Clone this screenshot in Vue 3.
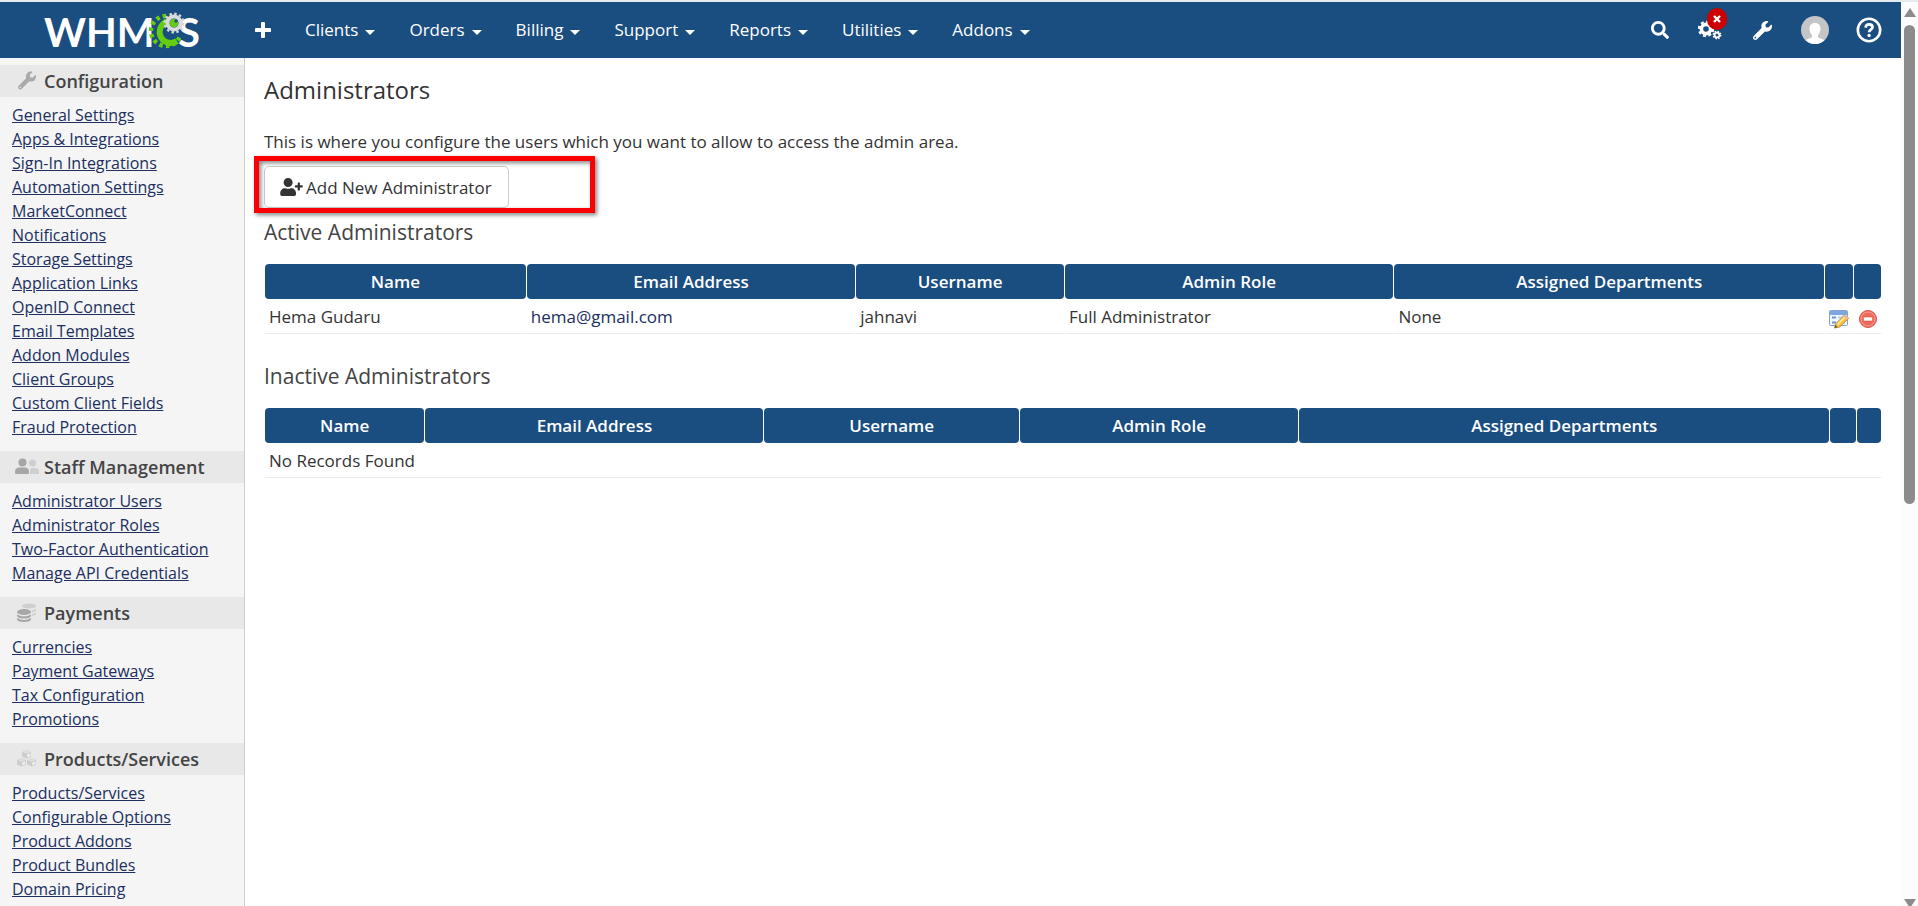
<template>
  <div class="page">
    <div class="view">
      <header class="topbar">
        <a href="#" class="logo" aria-label="WHMCS">
          <svg width="160" height="56" viewBox="0 -8 160 56">
            <text class="logo-text" x="0" y="37">WHM</text>
            <text class="logo-text" x="134" y="37">S</text>
            <clipPath id="green-side">
              <path d="M102 0H126V18L144 35V42H102Z" />
            </clipPath>
            <circle cx="122" cy="21" r="14" fill="#1a4d80" />
            <path d="M133 31A11 11 0 1 1 127 11" fill="none" stroke="#6c1" stroke-width="6" />
            <circle cx="122" cy="21" r="15" fill="none" stroke="#6c1" stroke-width="4.500" stroke-dasharray="3.500 3.230" pathLength="94.250" clip-path="url(#green-side)" />
            <circle cx="130" cy="13" r="6.500" fill="#1a4d80" stroke="#d8dadd" stroke-width="4" />
            <circle cx="130" cy="13" r="9.300" fill="none" stroke="#d8dadd" stroke-width="2.400" stroke-dasharray="2.400 2.470" />
            <circle cx="130" cy="13" r="4.300" fill="#6c1" />
            <circle cx="132" cy="11" r="1.700" fill="#1a4d80" />
          </svg>
        </a>

        <nav class="menu">
          <a href="#" class="menu-add" aria-label="Add">
            <svg width="16" height="16" viewBox="0 0 16 16">
              <path d="M8 1.500V14.500M1.500 8H14.500" stroke="#fff" stroke-width="4" stroke-linecap="round" />
            </svg>
          </a>
          <a v-for="item in menu" :key="item" href="#" class="menu-item">
            {{ item }}
            <span class="caret"></span>
          </a>
        </nav>

        <div class="tools">
          <button type="button" class="tool search" aria-label="Search">
            <svg width="18" height="18" viewBox="0 0 512 512"><path fill="#fff" :d="icons.search" /></svg>
          </button>
          <button type="button" class="tool cogs" aria-label="Automation status">
            <svg width="24" height="20" viewBox="0 0 24 20">
              <g fill="none" stroke="#fff">
                <circle cx="8" cy="9" r="4.600" stroke-width="3.600" />
                <circle cx="8" cy="9" r="7" stroke-width="2.400" stroke-dasharray="3 2.498" />
                <circle cx="19" cy="15" r="2.400" stroke-width="1.800" />
                <circle cx="19" cy="15" r="3.700" stroke-width="1.400" stroke-dasharray="1.600 1.306" />
                <circle cx="19" cy="4" r="2.400" stroke-width="1.800" />
              </g>
            </svg>
            <span class="badge">
              <svg width="8" height="8" viewBox="0 0 8 8"><path d="M1 1L7 7M7 1L1 7" stroke="#fff" stroke-width="2.400" /></svg>
            </span>
          </button>
          <button type="button" class="tool wrench" aria-label="Setup">
            <svg width="19" height="19" viewBox="0 0 512 512"><path fill="#fff" :d="icons.wrench" /></svg>
          </button>
          <button type="button" class="tool avatar" aria-label="My account">
            <svg width="28" height="28" viewBox="0 0 28 28">
              <circle cx="14" cy="14" r="14" fill="#c4c5c7" />
              <path d="M14 7C18 7 19.800 9.700 19.500 13.500C19.300 16.200 18 18 17 19V21C18 22.500 21.500 22.500 23.500 24.300A14 14 0 0 1 4.500 24.300C6.500 22.500 10 22.500 11 21V19C10 18 8.700 16.200 8.500 13.500C8.200 9.700 10 7 14 7Z" fill="#fff" />
            </svg>
          </button>
          <button type="button" class="tool help" aria-label="Help">
            <svg width="26" height="26" viewBox="0 0 26 26" fill="none" stroke="#fff">
              <circle cx="13" cy="13" r="11.200" stroke-width="2.600" />
              <path d="M9.600 10.600C9.900 8.300 11.300 7.400 13.100 7.400C15.200 7.400 16.500 8.600 16.500 10.300C16.500 12.600 13.100 12.700 13.100 15.200" stroke-width="2.800" />
              <circle cx="13.100" cy="18.500" r="1.700" fill="#fff" stroke="none" />
            </svg>
          </button>
        </div>
      </header>

      <div class="body">
        <aside class="sidebar">
          <section v-for="group in sidebar" :key="group.title" class="group">
            <h3 class="group-title">
              <svg v-if="group.icon === 'wrench'" class="group-icon" viewBox="0 0 24 20">
                <svg x="3" y="0" width="18" height="19" viewBox="0 0 512 512"><path fill="#aaa" :d="icons.wrench" /></svg>
              </svg>
              <svg v-else-if="group.icon === 'users'" class="group-icon" viewBox="0 0 24 20">
                <g fill="#cfcfcf">
                  <circle cx="17.500" cy="6" r="3.500" />
                  <path d="M15 17V12.500Q15 11 17 11H20Q24 11 24 14.500V17Z" />
                </g>
                <g fill="#a6a6a6">
                  <circle cx="7.500" cy="5.500" r="4" />
                  <path d="M0 15Q0 10.500 4.500 10.500H10Q14 10.500 14 15V16Q14 17 13 17H1Q0 17 0 16Z" />
                </g>
              </svg>
              <svg v-else-if="group.icon === 'coins'" class="group-icon" viewBox="0 0 24 20">
                <g fill="#cfcfcf">
                  <ellipse cx="14" cy="3" rx="7" ry="2.500" />
                  <path d="M16.500 7.500Q20 7 21 5.500V7.500Q20 9 17 9.500ZM17 11Q20 10.500 21 9V11Q20 12.500 17 13Z" />
                </g>
                <g fill="#a6a6a6">
                  <ellipse cx="9" cy="9" rx="7" ry="3" />
                  <path d="M2 11.500Q9 15.500 16 11.500V13Q15 15.500 9 15.500T2 13ZM2 15Q9 19 16 15V16.500Q15 19 9 19T2 16.500Z" />
                </g>
              </svg>
              <svg v-else class="group-icon" viewBox="0 0 24 20">
                <g v-for="(cube, i) in cubes" :key="i" :transform="cube">
                  <path d="M0 2L4.500 0L9 2V6.500L4.500 8.500L0 6.500Z" fill="#cdcdcd" />
                  <path d="M0.500 2L4.500 0.300L8.500 2L4.500 3.800Z" fill="#e0e0e0" />
                  <path d="M5.300 4.500L8.200 3.300V6L5.300 7.300Z" fill="#f2f2f2" />
                </g>
              </svg>
              {{ group.title }}
            </h3>
            <ul class="links">
              <li v-for="link in group.links" :key="link"><a href="#">{{ link }}</a></li>
            </ul>
          </section>
        </aside>

        <main class="content">
          <h1>Administrators</h1>
          <p class="intro">This is where you configure the users which you want to allow to access the admin area.</p>

          <div class="actions">
            <button type="button" class="btn">
              <svg width="23" height="18" viewBox="0 0 640 512"><path fill="#333" :d="icons.userPlus" /></svg>
              Add New Administrator
            </button>
            <span class="highlight"></span>
          </div>

          <section v-for="list in lists" :key="list.title" class="list">
            <h2>{{ list.title }}</h2>
            <table class="datatable">
              <colgroup>
                <col v-for="(w, i) in list.widths" :key="i" :style="{ width: w + '%' }">
              </colgroup>
              <thead>
                <tr>
                  <th v-for="col in columns" :key="col">{{ col }}</th>
                  <th></th>
                  <th></th>
                </tr>
              </thead>
              <tbody>
                <tr v-for="row in list.rows" :key="row.username">
                  <td>{{ row.name }}</td>
                  <td><a :href="'mailto:' + row.email">{{ row.email }}</a></td>
                  <td>{{ row.username }}</td>
                  <td>{{ row.role }}</td>
                  <td>{{ row.departments }}</td>
                  <td class="icon-cell">
                    <a href="#" aria-label="Edit">
                      <svg width="20" height="20" viewBox="0 0 20 20">
                        <rect x="0.500" y="1.500" width="18" height="15" rx="1" fill="#f1f6fd" stroke="#7fa3d6" />
                        <rect x="1" y="2" width="17" height="4" fill="#7ea6e0" />
                        <path d="M3 8.500H7M3 13.500H7" stroke="#6c93cf" stroke-width="2" />
                        <path d="M9 8.500H16M9 13.500H16" stroke="#b9cdea" stroke-width="2" />
                        <path d="M5.500 19L7 14.500L15.500 6L19.500 9.500L10.500 18Z" fill="#f5c242" stroke="#c58a35" />
                        <path d="M8.500 15.500L16.500 7.500" stroke="#fbe38f" stroke-width="2" />
                        <path d="M5.500 19L6.500 16L8.500 18Z" fill="#555" />
                        <path d="M14.500 7L16 5.500L19.500 8.500L18.500 10.500Z" fill="#e9b7a0" />
                      </svg>
                    </a>
                  </td>
                  <td class="icon-cell">
                    <a href="#" aria-label="Delete">
                      <svg width="20" height="20" viewBox="0 0 20 20">
                        <circle cx="10" cy="10" r="8.500" fill="#ee6a5c" stroke="#d9564a" />
                        <circle cx="10" cy="10" r="7" fill="none" stroke="#f6a195" />
                        <rect x="5.500" y="8" width="9" height="4" rx="1" fill="#fff" stroke="#d8584b" stroke-width="0.600" />
                      </svg>
                    </a>
                  </td>
                </tr>
                <tr v-if="!list.rows.length">
                  <td colspan="7">No Records Found</td>
                </tr>
              </tbody>
            </table>
          </section>
        </main>
      </div>
    </div>

    <div class="scrollbar" aria-hidden="true">
      <span class="arrow up"></span>
      <span class="thumb"></span>
      <span class="arrow down"></span>
    </div>
  </div>
</template>

<script setup>
const icons = {
  search: 'M505 442.7L405.3 343c-4.5-4.5-10.6-7-17-7H372c27.6-35.3 44-79.7 44-128C416 93.1 322.9 0 208 0S0 93.1 0 208s93.1 208 208 208c48.3 0 92.7-16.4 128-44v16.3c0 6.4 2.5 12.5 7 17l99.7 99.7c9.4 9.4 24.6 9.4 33.9 0l28.3-28.3c9.4-9.4 9.4-24.6.1-34zM208 336c-70.7 0-128-57.2-128-128 0-70.7 57.2-128 128-128 70.7 0 128 57.2 128 128 0 70.7-57.2 128-128 128z',
  wrench: 'M507.73 109.1c-2.24-9.03-13.54-12.09-20.12-5.51l-74.36 74.36-67.88-11.31-11.31-67.88 74.36-74.36c6.62-6.62 3.43-17.9-5.66-20.16-47.38-11.74-99.55.91-136.58 37.93-39.64 39.64-50.55 97.1-34.05 147.2L18.74 402.76c-24.99 24.99-24.99 65.51 0 90.5 24.99 24.99 65.51 24.99 90.5 0l213.21-213.21c50.12 16.71 107.47 5.68 147.37-34.22 37.07-37.07 49.7-89.32 37.91-136.73zM64 472c-13.25 0-24-10.75-24-24 0-13.26 10.75-24 24-24s24 10.75 24 24c0 13.25-10.75 24-24 24z',
  userPlus: 'M624 208h-64v-64c0-8.8-7.2-16-16-16h-32c-8.8 0-16 7.2-16 16v64h-64c-8.8 0-16 7.2-16 16v32c0 8.8 7.2 16 16 16h64v64c0 8.8 7.2 16 16 16h32c8.8 0 16-7.2 16-16v-64h64c8.8 0 16-7.2 16-16v-32c0-8.8-7.2-16-16-16zm-400 48c70.7 0 128-57.3 128-128S294.7 0 224 0 96 57.3 96 128s57.3 128 128 128zm89.6 32h-16.7c-22.2 10.2-46.9 16-72.9 16s-50.6-5.8-72.9-16h-16.7C60.2 288 0 348.2 0 422.4V464c0 26.5 21.5 48 48 48h352c26.5 0 48-21.5 48-48v-41.6c0-74.2-60.2-134.4-134.4-134.4z',
}

const cubes = ['translate(7 1)', 'translate(2 9)', 'translate(12 9)']

const menu = ['Clients', 'Orders', 'Billing', 'Support', 'Reports', 'Utilities', 'Addons']

const sidebar = [
  {
    title: 'Configuration',
    icon: 'wrench',
    links: [
      'General Settings',
      'Apps & Integrations',
      'Sign-In Integrations',
      'Automation Settings',
      'MarketConnect',
      'Notifications',
      'Storage Settings',
      'Application Links',
      'OpenID Connect',
      'Email Templates',
      'Addon Modules',
      'Client Groups',
      'Custom Client Fields',
      'Fraud Protection',
    ],
  },
  {
    title: 'Staff Management',
    icon: 'users',
    links: ['Administrator Users', 'Administrator Roles', 'Two-Factor Authentication', 'Manage API Credentials'],
  },
  {
    title: 'Payments',
    icon: 'coins',
    links: ['Currencies', 'Payment Gateways', 'Tax Configuration', 'Promotions'],
  },
  {
    title: 'Products/Services',
    icon: 'cubes',
    links: ['Products/Services', 'Configurable Options', 'Product Addons', 'Product Bundles', 'Domain Pricing'],
  },
]

const columns = ['Name', 'Email Address', 'Username', 'Admin Role', 'Assigned Departments']

const lists = [
  {
    title: 'Active Administrators',
    widths: [16.2, 20.4, 12.9, 20.4, 26.7, 1.7, 1.7],
    rows: [
      {
        name: 'Hema Gudaru',
        email: 'hema@gmail.com',
        username: 'jahnavi',
        role: 'Full Administrator',
        departments: 'None',
      },
    ],
  },
  {
    title: 'Inactive Administrators',
    widths: [9.9, 21, 15.8, 17.3, 32.9, 1.6, 1.5],
    rows: [],
  },
]
</script>

<style>
body {
  margin: 0;
}
</style>

<style scoped>
.page {
  display: flex;
  box-sizing: border-box;
  height: 100vh;
  overflow: hidden;
  border-top: 2px solid #e6ebf0;
  background: #fff;
  color: #333;
  font-family: "Open Sans", "Noto Sans", sans-serif;
  font-size: 17px;
}

.view {
  flex: 1;
  min-width: 0;
  display: flex;
  flex-direction: column;
}

a {
  color: #202f60;
  text-decoration: none;
}

svg {
  display: block;
}

/* top bar */
.topbar {
  flex: none;
  display: flex;
  align-items: center;
  height: 56px;
  padding: 0 19px 0 44px;
  background: #1a4d80;
}

.logo-text {
  fill: #fff;
  font-family: Lato, sans-serif;
  font-size: 40px;
  font-weight: 700;
}

.menu {
  display: flex;
  align-items: center;
  margin-left: 51px;
}

.menu-add {
  margin-right: 17px;
}

.menu-item {
  display: flex;
  align-items: center;
  gap: 7px;
  padding: 0 17px;
  line-height: 24px;
  color: #fff;
}

.caret {
  margin-top: 4px;
  border: 5px solid transparent;
  border-top-color: #fff;
  border-bottom: 0;
}

.tools {
  display: flex;
  align-items: center;
  gap: 27px;
  margin-left: auto;
}

.tool {
  position: relative;
  padding: 0;
  border: 0;
  background: none;
  cursor: pointer;
}

.tool.search,
.tool.wrench {
  margin-right: 2px;
}

.tool.cogs {
  margin-right: 4px;
}

.badge {
  position: absolute;
  top: -12px;
  right: -5px;
  display: flex;
  align-items: center;
  justify-content: center;
  width: 20px;
  height: 22px;
  border-radius: 10px;
  background: #c00;
}

/* sidebar */
.body {
  flex: 1;
  min-height: 0;
  display: flex;
}

.sidebar {
  flex: none;
  box-sizing: border-box;
  width: 245px;
  padding-top: 7px;
  overflow: hidden;
  border-right: 1px solid #ccc;
  background: #f5f5f5;
}

.group {
  margin-bottom: 12px;
}

.group-title {
  display: flex;
  align-items: center;
  gap: 5px;
  height: 32px;
  margin: 0;
  padding-left: 15px;
  background: #e8e8e8;
  color: #444;
  font-size: 18px;
  font-weight: 600;
  line-height: 32px;
}

.group-icon {
  width: 24px;
  height: 20px;
}

.links {
  margin: 0;
  padding: 6px 12px 0;
  list-style: none;
  font-size: 16px;
  line-height: 24px;
}

.links a {
  text-decoration: underline;
}

/* content */
.content {
  flex: 1;
  min-width: 0;
  padding: 15px 19px 0;
}

h1 {
  margin: 0;
  font-size: 24px;
  font-weight: 400;
  line-height: 34px;
}

.intro {
  margin: 23px 0 12px;
  line-height: 24px;
}

.actions {
  position: relative;
  margin-bottom: 9px;
}

.btn {
  display: flex;
  align-items: center;
  gap: 3px;
  height: 42px;
  padding: 0 16px 0 15px;
  border: 1px solid #ccc;
  border-radius: 5px;
  background: #fff;
  color: #333;
  font: inherit;
  cursor: pointer;
}

/* red marker around the button */
.highlight {
  position: absolute;
  top: -10px;
  left: -10px;
  box-sizing: border-box;
  width: 341px;
  height: 57px;
  border: 5px solid #fb0000;
  filter: drop-shadow(2px 2px 2px rgba(0, 0, 0, 0.5));
  pointer-events: none;
}

.list {
  margin-bottom: 26px;
}

h2 {
  margin: 0 0 16px;
  color: #444;
  font-size: 21px;
  font-weight: 400;
  line-height: 30px;
}

.datatable {
  width: 100%;
  table-layout: fixed;
  border-collapse: separate;
  border-spacing: 1px;
  line-height: 24px;
}

.datatable th {
  box-sizing: border-box;
  height: 35px;
  padding: 0;
  border-radius: 4px;
  background: #1a4d80;
  color: #fff;
  font-weight: 600;
}

.datatable td {
  box-sizing: border-box;
  height: 34px;
  padding: 0 4px;
  border-bottom: 1px solid #ebebeb;
}

.datatable .icon-cell {
  padding-top: 5px;
}

/* scrollbar */
.scrollbar {
  flex: none;
  display: flex;
  flex-direction: column;
  align-items: center;
  width: 17px;
  background: #fcfcfc;
}

.thumb {
  width: 11px;
  height: 53%;
  margin-top: 8px;
  border-radius: 6px;
  background: #8b8b8b;
}

.arrow {
  border: 6px solid transparent;
}

.arrow.up {
  margin-top: 6px;
  border-top: 0;
  border-bottom: 9px solid #8b8b8b;
}

.arrow.down {
  margin-top: auto;
  margin-bottom: -2px;
  border-bottom: 0;
  border-top: 9px solid #8b8b8b;
}
</style>
